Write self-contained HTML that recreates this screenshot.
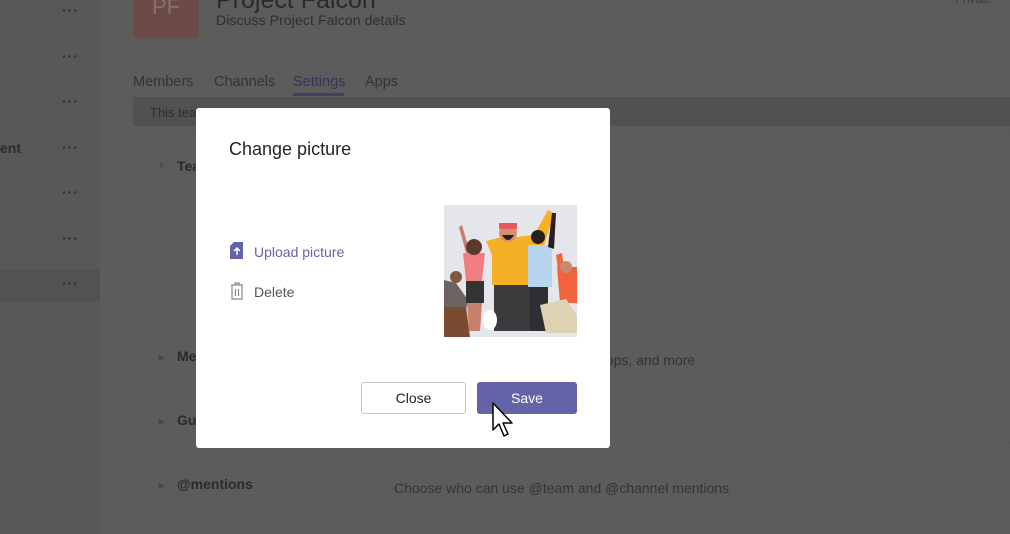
<!DOCTYPE html>
<html><head><meta charset="utf-8"><style>
body{margin:0;width:1010px;height:534px;overflow:hidden;background:#5c5c5c;font-family:"Liberation Sans",sans-serif;position:relative}
.a{position:absolute;white-space:nowrap}
.dots{position:absolute;left:62px;color:#2a2a2a;font-size:14px;letter-spacing:1px;font-weight:bold}
</style></head><body>
<div class="a" style="left:0;top:0;width:100px;height:534px;background:#585858"></div>
<div class="a" style="left:0;top:270px;width:100px;height:32px;background:#525252"></div>
<div class="dots" style="top:2px">···</div>
<div class="dots" style="top:48px">···</div>
<div class="dots" style="top:93px">···</div>
<div class="dots" style="top:139px">···</div>
<div class="dots" style="top:184px">···</div>
<div class="dots" style="top:230px">···</div>
<div class="dots" style="top:275px">···</div>
<div class="a" style="left:0;top:140px;font-size:14px;font-weight:bold;color:#2a2a2a">ent</div>
<div class="a" style="left:133px;top:0;width:66px;height:38px;background:#6c4a47;border-radius:0 0 3px 3px"></div>
<div class="a" style="left:152px;top:-6px;font-size:22px;color:#8a706d">PF</div>
<div class="a" style="left:216px;top:-14px;font-size:25px;color:#2a2a2a">Project Falcon</div>
<div class="a" style="left:216px;top:12px;font-size:14px;color:#2e2e2e;letter-spacing:0.1px">Discuss Project Falcon details</div>
<div class="a" style="left:955px;top:-8px;font-size:12px;color:#3a3a3a">Private</div>
<div class="a" style="left:133px;top:74px;font-size:14.5px;color:#333">Members</div>
<div class="a" style="left:214px;top:74px;font-size:14.5px;color:#333">Channels</div>
<div class="a" style="left:293px;top:74px;font-size:14.5px;color:#33345a">Settings</div>
<div class="a" style="left:293px;top:93px;width:51px;height:3px;background:#3e3f66"></div>
<div class="a" style="left:365px;top:74px;font-size:14.5px;color:#333">Apps</div>
<div class="a" style="left:133px;top:97px;width:877px;height:29px;background:#515151"></div>
<div class="a" style="left:150px;top:105px;font-size:13px;color:#2e2e2e">This team</div>
<div class="a" style="left:133px;top:132px;width:877px;border-top:1px dashed #565656"></div>
<div class="a" style="left:133px;top:442px;width:877px;border-top:1px dashed #565656"></div>
<div class="a" style="left:157px;top:160px;font-size:9px;color:#4a4a4a">▼</div>
<div class="a" style="left:177px;top:158px;font-size:14px;font-weight:bold;color:#2a2a2a">Team</div>
<div class="a" style="left:158px;top:352px;font-size:9px;color:#4a4a4a">▶</div>
<div class="a" style="left:177px;top:348px;font-size:14px;font-weight:bold;color:#2a2a2a">Members</div>
<div class="a" style="left:158px;top:416px;font-size:9px;color:#4a4a4a">▶</div>
<div class="a" style="left:177px;top:412px;font-size:14px;font-weight:bold;color:#2a2a2a">Guest</div>
<div class="a" style="left:158px;top:480px;font-size:9px;color:#4a4a4a">▶</div>
<div class="a" style="left:177px;top:476px;font-size:14px;font-weight:bold;color:#2a2a2a">@mentions</div>
<div class="a" style="left:598px;top:352px;font-size:14px;color:#333">apps, and more</div>
<div class="a" style="left:394px;top:480px;font-size:14px;color:#333">Choose who can use @team and @channel mentions</div>

<div class="a" style="left:196px;top:108px;width:414px;height:340px;background:#fff;border-radius:3px"></div>
<div class="a" style="left:229px;top:139px;font-size:18px;color:#252424">Change picture</div>
<svg class="a" style="left:230px;top:242px" width="14" height="18" viewBox="0 0 14 18"><path d="M0 4L4 0H13V17H0Z" fill="#6264a7"/><path d="M7 13V6M4 9L7 6L10 9" stroke="#fff" stroke-width="1.5" fill="none"/></svg>
<div class="a" style="left:254px;top:244px;font-size:14px;color:#6264a7">Upload picture</div>
<svg class="a" style="left:230px;top:282px" width="14" height="18" viewBox="0 0 14 18"><path d="M1 3H13M5 3V1H9V3M2 3V17H12V3M5.5 7V14M8.5 7V14" stroke="#888" stroke-width="1.2" fill="none"/></svg>
<div class="a" style="left:254px;top:284px;font-size:14px;color:#555">Delete</div>
<svg class="a" style="left:444px;top:205px" width="133" height="132" viewBox="0 0 133 132">
<rect width="133" height="132" fill="#e4e6ec"/>
<path d="M0 75L12 78L24 95L22 105H0Z" fill="#6d6462"/>
<path d="M0 102H22L26 132H0Z" fill="#7a4a31"/>
<circle cx="12" cy="72" r="6" fill="#7c5a45"/>
<path d="M15 22L18 20L26 48H22Z" fill="#c9806a"/>
<path d="M19 48H41L38 76H22Z" fill="#ef7d81"/>
<rect x="22" y="76" width="18" height="22" fill="#333"/>
<path d="M23 98H38L36 126H25Z" fill="#c9806a"/>
<circle cx="30" cy="42" r="8" fill="#5a3a2a"/>
<path d="M42 36L58 32H72L90 30L104 5L110 8L98 48L88 48V80H48V50Z" fill="#f5b026"/>
<circle cx="64" cy="28" r="9" fill="#d39070"/>
<rect x="55" y="18" width="18" height="6" fill="#e55b5b"/>
<path d="M58 30Q64 40 70 30Z" fill="#2b1f1c"/>
<rect x="50" y="80" width="38" height="46" fill="#3b3a3d"/>
<path d="M84 40H108V82H84Z" fill="#b7d5ec"/>
<rect x="86" y="82" width="18" height="44" fill="#2f2f33"/>
<circle cx="94" cy="32" r="7" fill="#2b1f1c"/>
<path d="M104 42L108 8H112L110 44Z" fill="#2b1f1c"/>
<path d="M113 62H133V98H116Z" fill="#f0643c"/>
<path d="M112 50L118 48L120 64H114Z" fill="#f0643c"/>
<path d="M96 100L122 94L133 110V128H102Z" fill="#ddd2b2"/>
<circle cx="122" cy="62" r="6" fill="#c58a6f"/>
<ellipse cx="46" cy="115" rx="7" ry="10" fill="#fff"/>
</svg>
<div class="a" style="left:361px;top:382px;width:103px;height:30px;border:1px solid #c8c6c4;border-radius:3px;background:#fff;text-align:center;line-height:30px;font-size:14px;color:#252424">Close</div>
<div class="a" style="left:477px;top:382px;width:100px;height:32px;background:#6264a7;border-radius:3px;text-align:center;line-height:32px;font-size:14px;color:#fff">Save</div>
<svg class="a" style="left:492px;top:402px" width="24" height="36" viewBox="0 0 24 36"><path d="M1 1V28L7 22L12 34L16 32L11 21H20Z" fill="#fff" stroke="#000" stroke-width="1.5" stroke-linejoin="round"/></svg>
</body></html>
